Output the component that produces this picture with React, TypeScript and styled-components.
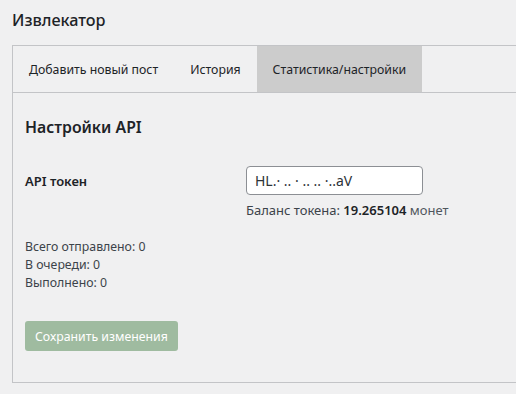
import styled, { createGlobalStyle } from "styled-components";

const GlobalStyle = createGlobalStyle`
  html, body {
    margin: 0;
    padding: 0;
    background: #f0f0f1;
    overflow: hidden;
  }
  body {
    font-family: "Noto Sans", "Open Sans", Arial, sans-serif;
    color: #1d2327;
  }
`;

const Page = styled.div`
  padding: 10px 0 0 12px;
`;

const Title = styled.h1`
  margin: 0 0 15px 0;
  font-size: 16.2px;
  font-weight: 500;
  line-height: 20px;
  color: #1d2327;
`;

const Panel = styled.div`
  width: calc(100% + 20px);
  box-sizing: border-box;
  border: 1px solid #c3c4c7;
  border-right: none;
`;

const Tabs = styled.div`
  display: flex;
  border-bottom: 1px solid #c3c4c7;
`;

const Tab = styled.div<{ $active?: boolean }>`
  height: 46px;
  padding: 0 16px;
  display: flex;
  align-items: center;
  font-size: 12.3px;
  color: #1d2327;
  background: ${(p) => (p.$active ? "#cccccc" : "transparent")};
  cursor: pointer;
`;

const Content = styled.div`
  padding: 22px 12px 31px 12px;
`;

const Heading = styled.h2`
  margin: 0 0 27px 0;
  font-size: 15.8px;
  font-weight: 600;
  line-height: 24px;
  color: #1d2327;
`;

const FormRow = styled.div`
  display: flex;
  align-items: flex-start;
`;

const Label = styled.div`
  width: 221px;
  padding-top: 6px;
  font-size: 13px;
  font-weight: 600;
  color: #1d2327;
`;

const Field = styled.div`
  display: flex;
  flex-direction: column;
  gap: 6px;
`;

const TokenInput = styled.input`
  width: 177px;
  height: 29px;
  box-sizing: border-box;
  padding: 0 8px;
  border: 1px solid #8c8f94;
  border-radius: 4px;
  background: #fff;
  font-family: inherit;
  font-size: 14px;
  color: #2c3338;
`;

const Balance = styled.div`
  font-size: 13px;
  color: #3c434a;

  b {
    font-weight: 600;
    color: #1d2327;
  }
  span {
    color: #50575e;
  }
`;

const Stats = styled.div`
  margin-top: 19px;
  display: flex;
  flex-direction: column;
  font-size: 12.3px;
  line-height: 18px;
  color: #3c434a;
`;

const SaveButton = styled.button`
  margin-top: 29px;
  height: 30px;
  padding: 0 10px;
  border: none;
  border-radius: 3px;
  background: #9fbba0;
  color: #ffffff;
  font-family: inherit;
  font-size: 12.3px;
`;

export default function App() {
  return (
    <Page>
      <GlobalStyle />
      <Title>Извлекатор</Title>
      <Panel>
        <Tabs>
          <Tab>Добавить новый пост</Tab>
          <Tab>История</Tab>
          <Tab $active>Статистика/настройки</Tab>
        </Tabs>
        <Content>
          <Heading>Настройки API</Heading>
          <FormRow>
            <Label>API токен</Label>
            <Field>
              <TokenInput readOnly value="HL.⸱ ‥ ⸱ ‥ ‥ ⸱..aV" />
              <Balance>
                Баланс токена: <b>19.265104</b> <span>монет</span>
              </Balance>
            </Field>
          </FormRow>
          <Stats>
            <div>Всего отправлено: 0</div>
            <div>В очереди: 0</div>
            <div>Выполнено: 0</div>
          </Stats>
          <SaveButton disabled>Сохранить изменения</SaveButton>
        </Content>
      </Panel>
    </Page>
  );
}
